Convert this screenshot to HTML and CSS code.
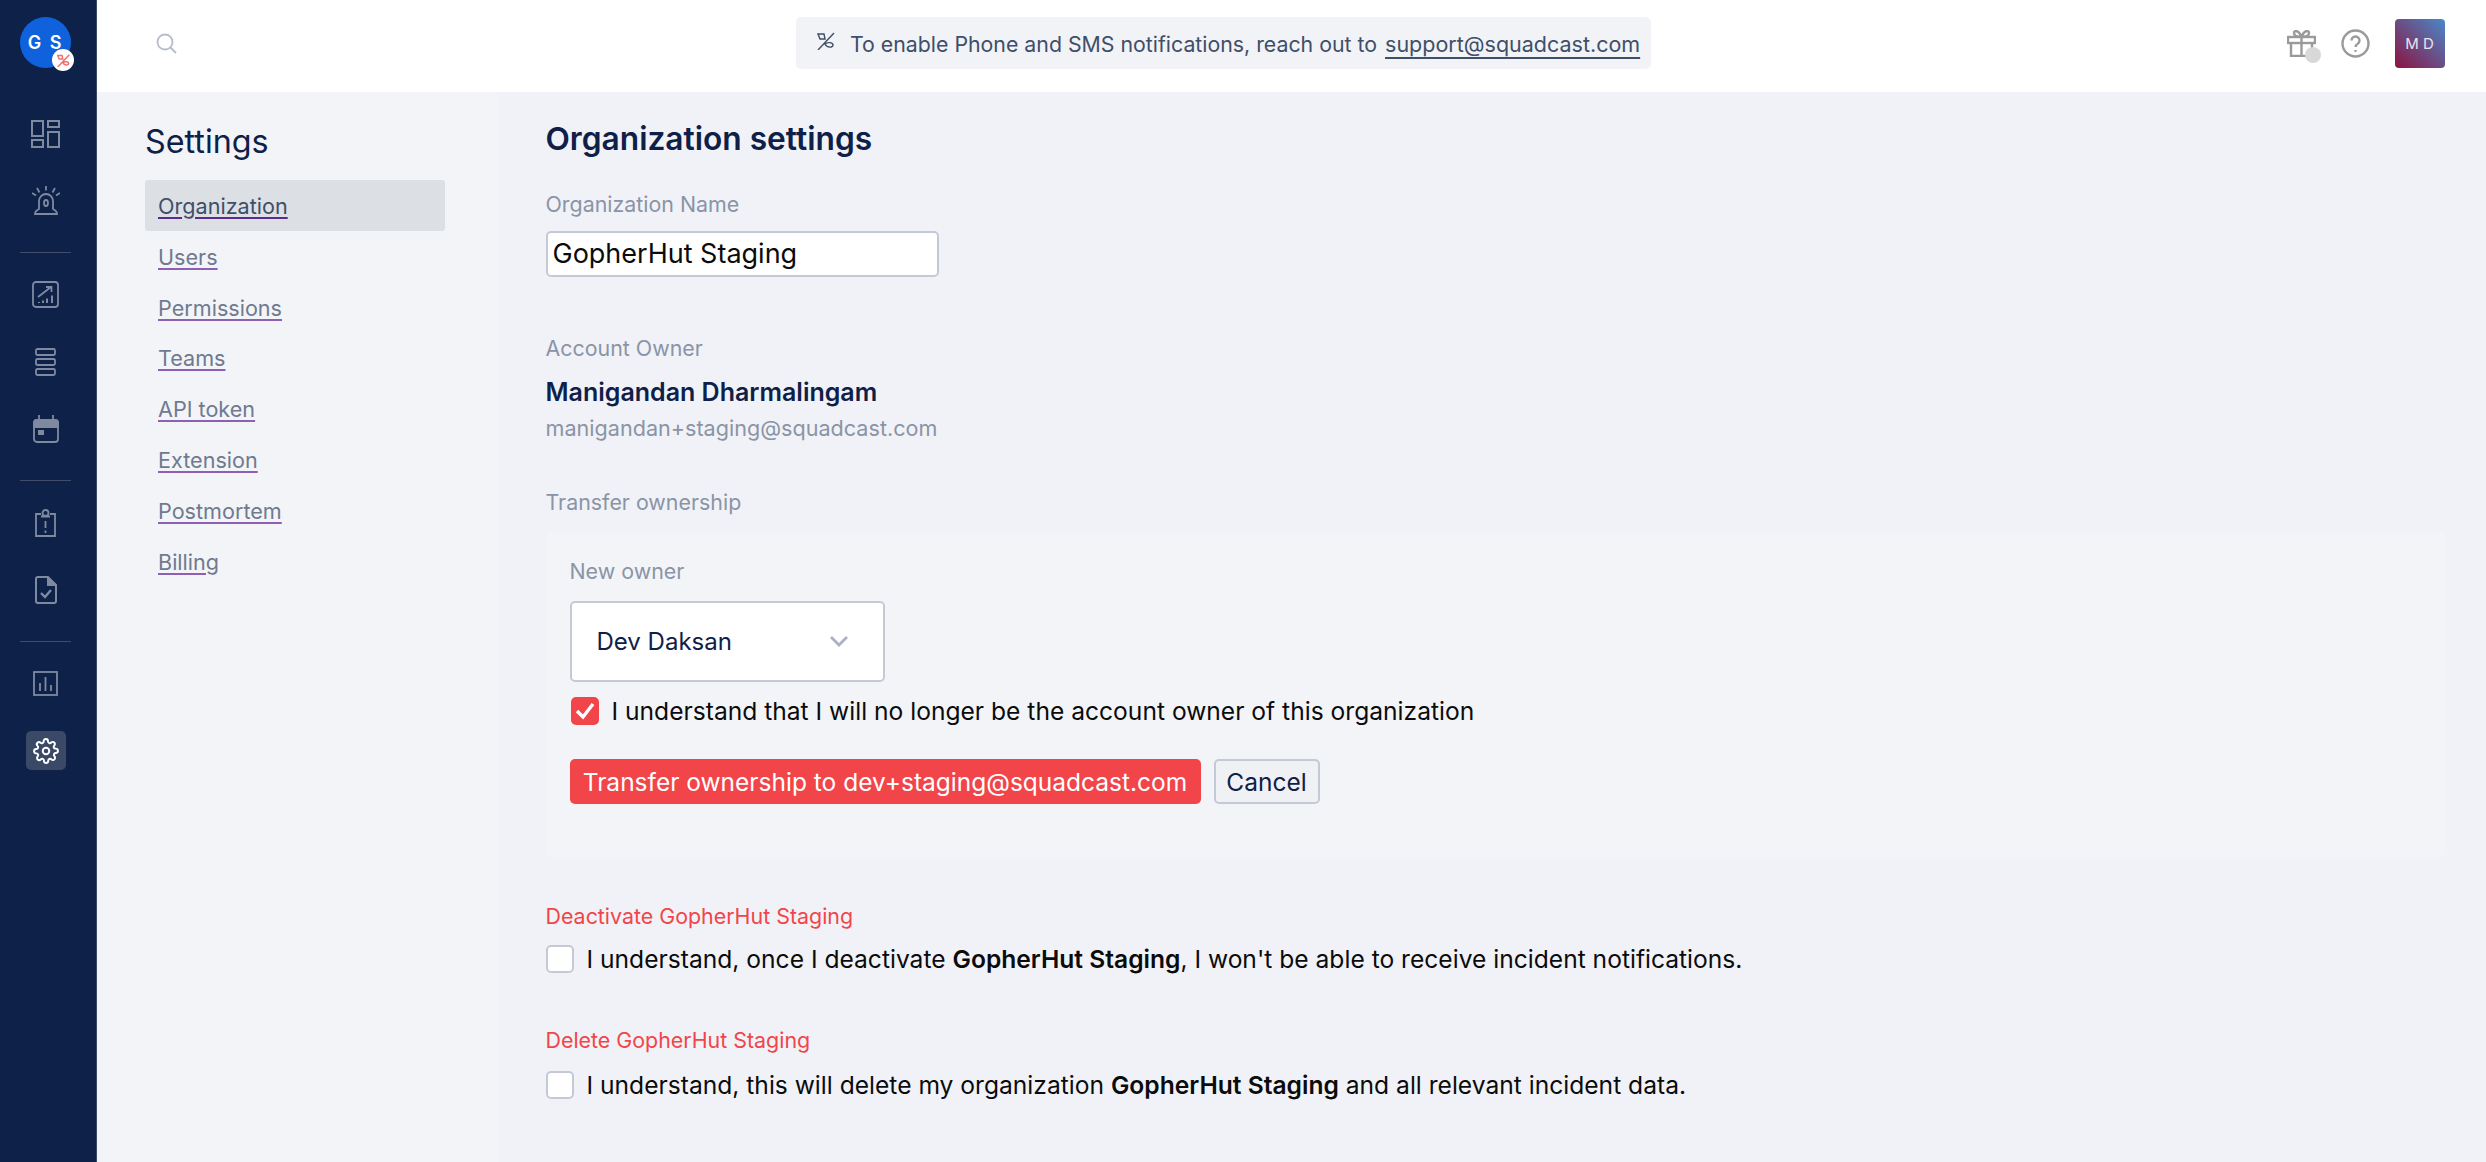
FILE: index.html
```html
<!DOCTYPE html>
<html>
<head>
<meta charset="utf-8" />
<title>Organization settings</title>
<link rel="stylesheet" href="styles.css">
</head>
<body>
<div class="app">
  <aside class="rail">
    <div class="logo">
      <span class="logo-text">G S</span>
      <span class="logo-badge">
        <svg width="13" height="13" viewBox="0 0 18 18" fill="none" stroke="#f26d6d" stroke-width="2"><path d="M1 18L17 1M1 2h6l1 5H3zM8 12c2-2 8-2 8 1s-6 3-8-1z"/></svg>
      </span>
    </div>
    <div class="rail-group">
      <a class="rail-item">
        <svg width="29" height="28" viewBox="0 0 29 28" fill="none" stroke="#7f8aa0" stroke-width="2"><rect x="1" y="1" width="11" height="15"/><rect x="17" y="1" width="11" height="6"/><rect x="1" y="20" width="11" height="7"/><rect x="17" y="12" width="11" height="15"/></svg>
      </a>
      <a class="rail-item">
        <svg width="28" height="29" viewBox="0 0 28 29" fill="none" stroke="#7f8aa0" stroke-width="1.8"><path d="M3 28c0-3 2-4 4-5v-8a7 7 0 0 1 14 0v8c2 1 4 2 4 5z"/><ellipse cx="14" cy="17" rx="2" ry="3"/><path d="M14 0v4.500M5 2l2.500 4.500M23 2l-2.500 4.500M0 7l4 2.500M28 7l-4 2.500"/></svg>
      </a>
    </div>
    <div class="rail-line"></div>
    <div class="rail-group">
      <a class="rail-item">
        <svg width="27" height="27" viewBox="0 0 27 27" fill="none" stroke="#7f8aa0" stroke-width="1.8"><rect x="1" y="1" width="25" height="25" rx="3"/><path d="M6 16L19 6M14 6h5.500v5"/><path d="M7 21v1M11 19.500V22M15 17.500V22M20 14.500V22" stroke-width="2"/></svg>
      </a>
      <a class="rail-item">
        <svg width="21" height="28" viewBox="0 0 21 28" fill="none" stroke="#7f8aa0" stroke-width="1.8"><rect x="1" y="1" width="19" height="6" rx="1.500"/><rect x="1" y="11" width="19" height="6" rx="1.500"/><rect x="1" y="21" width="19" height="6" rx="1.500"/></svg>
      </a>
      <a class="rail-item">
        <svg width="26" height="28" viewBox="0 0 26 28" fill="none" stroke="#7f8aa0" stroke-width="1.8"><rect x="1" y="5" width="24" height="22" rx="3"/><path d="M1 8a3 3 0 0 1 3-3h18a3 3 0 0 1 3 3v4H1z" fill="#7f8aa0"/><path d="M6 0v5M20 0v5"/><rect x="5" y="15" width="6" height="5" fill="#7f8aa0" stroke="none"/></svg>
      </a>
    </div>
    <div class="rail-line"></div>
    <div class="rail-group">
      <a class="rail-item">
        <svg width="21" height="28" viewBox="0 0 21 28" fill="none" stroke="#7f8aa0" stroke-width="1.8"><path d="M6 5H1v22h19V5h-5"/><circle cx="10.500" cy="4" r="3"/><path d="M6 7.500h9M10.500 12v7M10.500 21.500v2.500"/></svg>
      </a>
      <a class="rail-item">
        <svg width="22" height="28" viewBox="0 0 22 28" fill="none" stroke="#7f8aa0" stroke-width="2"><path d="M3 1h10l8 8v16a2 2 0 0 1-2 2H3a2 2 0 0 1-2-2V3a2 2 0 0 1 2-2z"/><path d="M13 1v8h8" fill="#7f8aa0"/><path d="M6 17l4 4 6-7" stroke-width="2.400"/></svg>
      </a>
    </div>
    <div class="rail-line"></div>
    <div class="rail-group">
      <a class="rail-item">
        <svg width="25" height="25" viewBox="0 0 25 25" fill="none" stroke="#7f8aa0" stroke-width="1.8"><rect x="1" y="1" width="23" height="23"/><path d="M7 20v-8M12.500 20V6M18 20v-6"/></svg>
      </a>
      <a class="rail-item">
        <span class="gear-box">
          <svg width="26" height="26" viewBox="0 0 24 24" fill="none" stroke="#fff" stroke-width="1.800" stroke-linecap="round" stroke-linejoin="round"><circle cx="12" cy="12" r="3"/><path d="M19.400 15a1.650 1.650 0 0 0 .33 1.820l.06.06a2 2 0 1 1-2.830 2.830l-.06-.06a1.650 1.650 0 0 0-2.800 1.170V21a2 2 0 1 1-4 0v-.09a1.650 1.650 0 0 0-2.900-1.110l-.06.06a2 2 0 1 1-2.830-2.830l.06-.06a1.650 1.650 0 0 0-1.170-2.800H3a2 2 0 1 1 0-4h.09a1.650 1.650 0 0 0 1.110-2.900l-.06-.06a2 2 0 1 1 2.830-2.830l.06.06a1.650 1.650 0 0 0 2.800-1.170V3a2 2 0 1 1 4 0v.09a1.650 1.650 0 0 0 2.900 1.110l.06-.06a2 2 0 1 1 2.830 2.830l-.06.06a1.650 1.650 0 0 0 1.170 2.800H21a2 2 0 1 1 0 4h-.09a1.650 1.650 0 0 0-1.510 1.170z"/></svg>
        </span>
      </a>
    </div>
  </aside>

  <div class="page">
    <header class="topbar">
      <svg class="search" width="21" height="21" viewBox="0 0 21 21" fill="none" stroke="#b6bdca" stroke-width="1.800"><circle cx="9" cy="9" r="7.500"/><path d="M14.500 14.500L20 20"/></svg>
      <div class="banner">
        <svg class="banner-icon" width="18" height="18" viewBox="0 0 18 18" fill="none" stroke="#3f4e69" stroke-width="1.400"><path d="M1 18L17 1M1 2h6l1 5H3zM8 12c2-2 8-2 8 1s-6 3-8-1z"/></svg>
        <span class="banner-text">To enable Phone and SMS notifications, reach out to</span>
        <a class="banner-link">support@squadcast.com</a>
      </div>
      <div class="top-right">
        <span class="gift">
          <svg width="29" height="28" viewBox="0 0 29 28" fill="none" stroke="#9a9a9a" stroke-width="2.400"><rect x="1" y="8" width="27" height="6"/><path d="M4 14v13h21V14M14.500 8v19M14.500 8C11 8 7 7 7 4s5-3 7.500 4C17 1 22 1 22 4s-4 4-7.500 4z"/></svg>
          <span class="gift-dot"></span>
        </span>
        <svg width="29" height="29" viewBox="0 0 29 29" fill="none" stroke="#9a9a9a" stroke-width="2.400"><circle cx="14.500" cy="14.500" r="13"/><path d="M10.500 11.500a4 4 0 1 1 6 3.500c-1.500.8-2 1.500-2 3"/><path d="M14.500 21v1.800"/></svg>
        <span class="avatar">M D</span>
      </div>
    </header>

    <div class="body">
      <nav class="side">
        <h2 class="side-title">Settings</h2>
        <a class="side-link side-link-on">Organization</a>
        <a class="side-link">Users</a>
        <a class="side-link">Permissions</a>
        <a class="side-link">Teams</a>
        <a class="side-link">API token</a>
        <a class="side-link">Extension</a>
        <a class="side-link">Postmortem</a>
        <a class="side-link">Billing</a>
      </nav>

      <main class="main">
        <h1 class="title">Organization settings</h1>
        <label class="label label-name">Organization Name</label>
        <div class="name-input">GopherHut Staging</div>

        <div class="label label-owner">Account Owner</div>
        <div class="owner-name">Manigandan Dharmalingam</div>
        <div class="owner-mail">manigandan+staging@squadcast.com</div>

        <div class="label label-transfer">Transfer ownership</div>
        <section class="transfer">
          <div class="label">New owner</div>
          <div class="select">
            <span>Dev Daksan</span>
            <svg width="18" height="11" viewBox="0 0 18 11" fill="none" stroke="#aab2c0" stroke-width="2.800"><path d="M1 1l8 8 8-8"/></svg>
          </div>
          <div class="check-row check-row-on">
            <span class="box box-on">
              <svg width="20" height="18" viewBox="0 0 20 18" fill="none" stroke="#fff" stroke-width="3.400"><path d="M2 9l6 6L18 2"/></svg>
            </span>
            <span>I understand that I will no longer be the account owner of this organization</span>
          </div>
          <div class="actions">
            <button class="btn btn-red">Transfer ownership to dev+staging@squadcast.com</button>
            <button class="btn btn-plain">Cancel</button>
          </div>
        </section>

        <div class="danger danger-first">Deactivate GopherHut Staging</div>
        <div class="check-row">
          <span class="box"></span>
          <span>I understand, once I deactivate <b>GopherHut Staging</b>, I won't be able to receive incident notifications.</span>
        </div>

        <div class="danger danger-second">Delete GopherHut Staging</div>
        <div class="check-row check-row-last">
          <span class="box"></span>
          <span>I understand, this will delete my organization <b>GopherHut Staging</b> and all relevant incident data.</span>
        </div>
      </main>
    </div>
  </div>
</div>
</body>
</html>
```

FILE: styles.css
```css
*{
	margin:0;
	padding:0;
	box-sizing:border-box;
}
html,body{
	height:100%;
	overflow:hidden;
}
body{
	font-family:"Inter","Noto Sans",sans-serif;
	background:#f0f2f7;
	color:#0f2048;
}
.app{
	display:flex;
	height:100%;
}

/* left rail */
.rail{
	width:97px;
	flex:none;
	background:#0d2149;
	border-right:1px solid #3a4a6b;
	padding:17px 5px 0 0;
	display:flex;
	flex-direction:column;
	align-items:center;
}
.logo{
	position:relative;
	width:51px;
	height:51px;
	border-radius:50%;
	background:#0f62dc;
	color:#fff;
	font-size:18px;
	font-weight:600;
	display:flex;
	align-items:center;
	justify-content:center;
	margin-bottom:32px;
}
.logo-text{
	letter-spacing:2px;
}
.logo-badge{
	position:absolute;
	right:-3px;
	bottom:-3px;
	width:22px;
	height:22px;
	border-radius:50%;
	background:#fff;
	display:flex;
	align-items:center;
	justify-content:center;
}
.rail-group{
	width:100%;
}
.rail-item{
	height:67px;
	display:flex;
	align-items:center;
	justify-content:center;
}
.rail-line{
	width:51px;
	height:1px;
	background:#3f4d6b;
	margin:18px 0 8px;
}
.gear-box{
	width:40px;
	height:39px;
	border-radius:5px;
	background:#3a4a66;
	display:flex;
	align-items:center;
	justify-content:center;
}

/* top bar */
.page{
	flex:1;
	min-width:0;
	display:flex;
	flex-direction:column;
}
.topbar{
	height:92px;
	flex:none;
	background:#fff;
	display:flex;
	align-items:center;
	position:relative;
	padding:0 41px 0 59px;
}
.search{
	margin-bottom:6px;
}
.banner{
	position:absolute;
	left:699px;
	top:17px;
	width:855px;
	height:52px;
	background:#f1f3f6;
	border-radius:5px;
	display:flex;
	align-items:center;
	padding:2px 0 0 21px;
	color:#3f4e69;
	font-size:21.500px;
}
.banner-icon{
	margin-right:15px;
	margin-top:-6px;
}
.banner-text{
	margin-right:8px;
	font-size:21.300px;
}
.banner-link{
	text-decoration:underline;
	text-underline-offset:5px;
}
.top-right{
	margin-left:auto;
	display:flex;
	align-items:center;
	margin-bottom:6px;
}
.gift{
	position:relative;
	width:29px;
	height:28px;
	margin-right:25px;
}
.gift-dot{
	position:absolute;
	right:-5px;
	bottom:-6px;
	width:16px;
	height:16px;
	border-radius:50%;
	background:#d8d8d8;
}
.avatar{
	width:50px;
	height:49px;
	margin-left:25px;
	border-radius:4px;
	background:linear-gradient(to top right,#8c1340,#4a88c9);
	color:#e6e6ef;
	font-size:15px;
	display:flex;
	align-items:center;
	justify-content:center;
	letter-spacing:1px;
	word-spacing:-2px;
}

/* settings list */
.body{
	flex:1;
	display:flex;
	min-height:0;
}
.side{
	width:400px;
	flex:none;
	background:#f3f4f7;
	padding:30px 52px 0 48px;
}
.side-title{
	font-size:32.300px;
	font-weight:400;
	line-height:40px;
	margin-bottom:18px;
}
.side-link{
	display:block;
	height:50.800px;
	line-height:52px;
	padding-left:13px;
	font-size:21.600px;
	color:#6f7a90;
	text-decoration:underline;
	text-decoration-color:#8f5fb5;
	text-underline-offset:3px;
	border-radius:3px;
}
.side-link-on{
	background:#dcdfe4;
	color:#3f4e69;
	text-decoration-color:#5b2a93;
}

/* main column */
.main{
	flex:1;
	padding:27px 41px 0 48.500px;
	min-width:0;
}
.title{
	font-size:31.700px;
	font-weight:600;
	line-height:40px;
}
.label{
	font-size:21.400px;
	line-height:28px;
	color:#8a94a6;
}
.label-name{
	display:block;
	margin-top:31px;
}
.name-input{
	width:393px;
	height:46px;
	margin-top:13px;
	padding-left:5px;
	background:#fff;
	border:2px solid #c4c9d6;
	border-radius:5px;
	color:#0b0b0b;
	font-size:27px;
	line-height:41px;
}
.label-owner{
	margin-top:57px;
}
.owner-name{
	font-size:25px;
	font-weight:600;
	line-height:32px;
	margin-top:14px;
}
.owner-mail{
	font-size:21.600px;
	line-height:28px;
	margin-top:6px;
	color:#8a94a6;
}
.label-transfer{
	margin-top:46px;
}
.transfer{
	margin-top:16px;
	height:325px;
	background:#f3f4f7;
	border-radius:5px;
	padding:25px 23px 0 24px;
}
.select{
	width:315px;
	height:81px;
	margin-top:16px;
	background:#fff;
	border:2px solid #c4c9d6;
	border-radius:5px;
	display:flex;
	align-items:center;
	justify-content:space-between;
	padding:0 35px 0 25px;
	font-size:24px;
	color:#0f2048;
}
.check-row{
	display:flex;
	align-items:center;
	gap:13px;
	font-size:24.600px;
	line-height:30px;
	color:#0b0b0b;
	margin-top:14px;
}
.check-row b{
	font-weight:600;
}
.check-row-on{
	padding-left:1px;
}
.check-row-last{
	margin-top:16px;
}
.box{
	width:28px;
	height:28px;
	flex:none;
	background:#fff;
	border:2px solid #c4c9d6;
	border-radius:5px;
	display:flex;
	align-items:center;
	justify-content:center;
}
.box-on{
	background:#f24549;
	border-color:#f24549;
}
.actions{
	display:flex;
	gap:13px;
	margin-top:33px;
}
.btn{
	height:45px;
	border-radius:5px;
	font-family:inherit;
	font-size:24.500px;
}
.btn-red{
	width:631px;
	background:#f24549;
	color:#fff;
	border:0;
}
.btn-plain{
	width:106px;
	background:#f0f1f4;
	color:#0f2048;
	border:2px solid #c4c9d6;
}
.danger{
	font-size:21.400px;
	line-height:28px;
	color:#f24549;
}
.danger-first{
	margin-top:45px;
}
.danger-second{
	margin-top:52px;
}
```
